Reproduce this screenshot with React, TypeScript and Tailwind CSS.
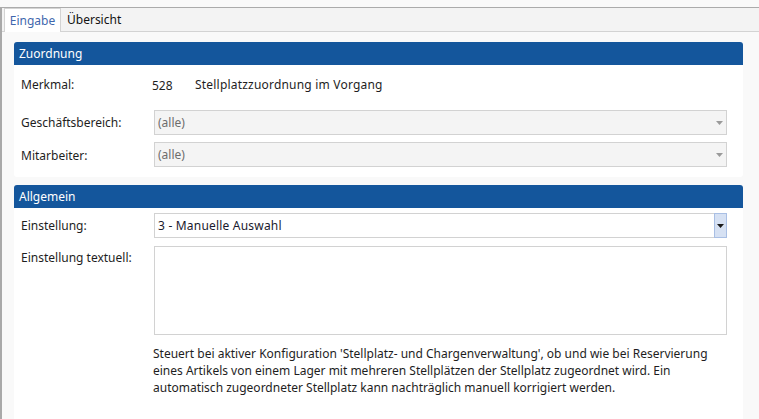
import React from "react";

const Arrow = ({ color }: { color: string }) => (
  <svg width="7" height="4" viewBox="0 0 7 4" className="block">
    <polygon points="0,0 7,0 3.5,4" fill={color} />
  </svg>
);

const DisabledSelect = ({ value }: { value: string }) => (
  <div className="flex-1 h-[25px] flex items-center justify-between border border-[#d2d2d2] bg-[#f4f4f4] pl-[3px] pr-[3px]">
    <span className="text-[#6d6d6d]">{value}</span>
    <Arrow color="#9a9a9a" />
  </div>
);

export default function App() {
  return (
    <div className="w-[759px] h-[419px] overflow-hidden bg-[#f9f9f9] text-[12px] text-[#1e1e1e] font-['Noto_Sans',sans-serif] flex flex-col">
      <div className="h-[7px] shrink-0 bg-[#f9f9f9]" />
      <div className="h-[1px] shrink-0 bg-[#ababab]" />
      <div className="flex flex-1 min-h-0">
        <div className="w-[2px] shrink-0 bg-[#a9a9a9]" />
        <div className="flex-1 flex flex-col min-w-0">
          {/* Tab bar */}
          <div className="h-[24px] shrink-0 bg-[#f3f3f3] border-b border-[#d3d3d3] flex items-end pl-[2px]">
            <div className="h-[24px] -mb-[1px] w-[57px] bg-white border border-b-0 border-[#d3d3d3] flex items-center justify-center text-[#3f67ad]">
              Eingabe
            </div>
            <div className="h-[23px] flex items-center pl-[6px] text-[#111]">Übersicht</div>
          </div>

          {/* Content */}
          <div className="flex-1 flex flex-col pt-[10px] pl-[12px] pr-[16px] gap-[8px] min-h-0">
            {/* Zuordnung */}
            <div className="flex flex-col shrink-0">
              <div className="h-[23px] rounded-t-[3px] bg-[#14569c] text-white flex items-center pl-[5px]">Zuordnung</div>
              <div className="bg-white rounded-b-[3px] pt-[7px] pb-[10px] pl-[7px] pr-[16px] flex flex-col">
                <div className="h-[25px] flex items-center">
                  <div className="w-[131px] shrink-0">Merkmal:</div>
                  <div className="w-[43px] shrink-0 pt-[2px]">528</div>
                  <div className="tracking-[0.2px]">Stellplatzzuordnung im Vorgang</div>
                </div>
                <div className="h-[25px] flex items-center mt-[13px]">
                  <div className="w-[133px] shrink-0">Geschäftsbereich:</div>
                  <DisabledSelect value="(alle)" />
                </div>
                <div className="h-[25px] flex items-center mt-[7px]">
                  <div className="w-[133px] shrink-0 pt-[3px]">Mitarbeiter:</div>
                  <DisabledSelect value="(alle)" />
                </div>
              </div>
            </div>

            {/* Allgemein */}
            <div className="flex flex-col flex-1 min-h-0">
              <div className="h-[23px] shrink-0 rounded-t-[3px] bg-[#14569c] text-white flex items-center pl-[5px]">Allgemein</div>
              <div className="flex-1 bg-white pt-[5px] pl-[7px] pr-[16px] flex flex-col">
                <div className="h-[25px] flex items-center">
                  <div className="w-[133px] shrink-0">Einstellung:</div>
                  <div className="flex-1 h-[25px] flex items-stretch border border-[#d2d2d2] bg-white">
                    <div className="flex-1 flex items-center pl-[3px] text-[#1a1a2e] tracking-[0.2px]">3 - Manuelle Auswahl</div>
                    <div className="w-[13px] -my-[1px] -mr-[1px] bg-[#d6e1f3] border border-[#a9bfe4] flex items-center justify-center">
                      <Arrow color="#1a1a1a" />
                    </div>
                  </div>
                </div>
                <div className="flex mt-[8px]">
                  <div className="w-[133px] shrink-0 pt-[3px]">Einstellung textuell:</div>
                  <div className="flex-1 h-[89px] border border-[#d2d2d2] bg-white" />
                </div>
                <div className="flex mt-[10px]">
                  <div className="w-[132px] shrink-0" />
                  <div className="flex-1 leading-[17px] text-[#1e1e1e]">
                    Steuert bei aktiver Konfiguration 'Stellplatz- und Chargenverwaltung', ob und wie bei Reservierung
                    <br />
                    eines Artikels von einem Lager mit mehreren Stellplätzen der Stellplatz zugeordnet wird. Ein
                    <br />
                    automatisch zugeordneter Stellplatz kann nachträglich manuell korrigiert werden.
                  </div>
                </div>
              </div>
            </div>
          </div>
        </div>
      </div>
    </div>
  );
}
